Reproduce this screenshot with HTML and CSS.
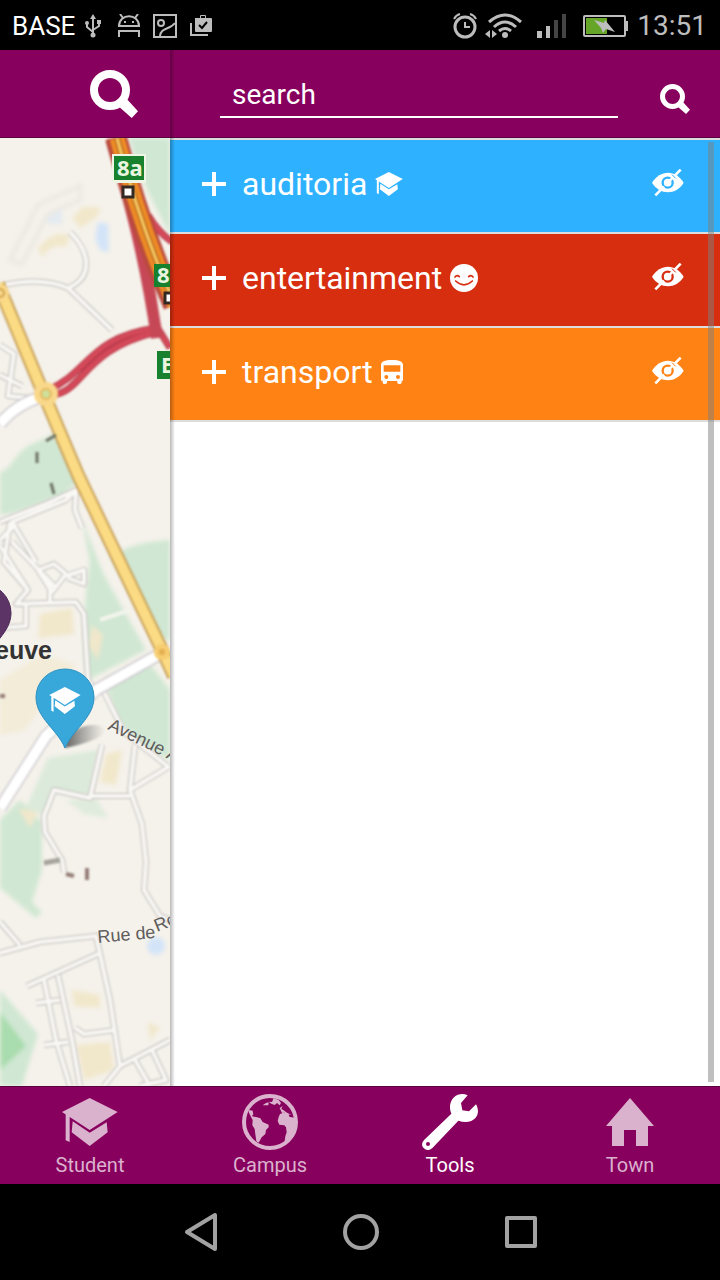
FILE: index.html
```html
<!DOCTYPE html>
<html lang="en">
<head>
<meta charset="utf-8">
<meta name="viewport" content="width=device-width, initial-scale=1">
<title>Campus map</title>
<link rel="stylesheet" href="styles.css">
</head>
<body>
<svg class="defs" aria-hidden="true">
  <symbol id="search" viewBox="0 0 144 144"><circle cx="60" cy="60" r="48" fill="none" stroke="currentColor" stroke-width="24"/><path d="M88 111 111 88 144 124 125 144Z" fill="currentColor"/></symbol>
  <symbol id="cap" viewBox="0 0 168 144"><path fill="currentColor" d="M83 0 167 42 83 96 0 42ZM11 46 23 54V132L11 127ZM32 70 83 104 134 73 137 103 83 144 29 103Z"/></symbol>
  <symbol id="plus" viewBox="0 0 24 24"><path d="M12 0V24M0 12H24" stroke="currentColor" stroke-width="4"/></symbol>
  <symbol id="hide" viewBox="0 0 96 90"><path fill="currentColor" d="M0 41C24 1 72 1 95 41C72 79 24 79 0 41Z"/><circle class="iris" cx="47" cy="41" r="15" fill="none" stroke-width="7"/><circle cx="47" cy="41" r="9" fill="currentColor"/><path d="M10 79 36 53M47 41 63 25M66 22 86 2" stroke="currentColor" stroke-width="8"/><path class="iris" d="M60 17 71 28" stroke-width="3"/></symbol>
</svg>

<header class="status">
  <div class="status-group">
    <span class="carrier">BASE</span>
    <svg width="24" height="24" viewBox="0 0 24 24" fill="none" stroke="currentColor" stroke-width="2"><path d="M12 3V22M6 9V13L12 18M18 9V12L12 16"/><path d="M12 0 15 5H9Z" fill="currentColor" stroke="none"/><circle cx="12" cy="21" r="2.500" fill="currentColor" stroke="none"/><circle cx="6" cy="9" r="2" fill="currentColor" stroke="none"/><path d="M16 6h4v4h-4z" fill="currentColor" stroke="none"/></svg>
    <svg width="24" height="24" viewBox="0 0 24 24" fill="none" stroke="currentColor" stroke-width="2"><path d="M2 12C2-1 22-1 22 12ZM6 4 3 0M18 4 21 0M2 23V17H22V23"/><path d="M7 7h2v2H7zM15 7h2v2h-2z" fill="currentColor" stroke="none"/></svg>
    <svg width="24" height="24" viewBox="0 0 24 24" fill="none" stroke="currentColor" stroke-width="2"><rect x="1" y="1" width="22" height="22"/><circle cx="8" cy="9" r="3"/><path d="M7 22C8 13 17 16 22 9"/></svg>
    <svg width="24" height="24" viewBox="0 0 24 24" fill="none"><path d="M2 9V21H19" stroke="currentColor" stroke-width="2"/><path d="M6 4h5V2q0-1 1-1h4q1 0 1 1v2h5q1 0 1 1v12q0 1-1 1H7q-1 0-1-1ZM12 2v2h4V2Z" fill="currentColor" fill-rule="evenodd"/><path d="M10 11 13 14 18 8" stroke="#000" stroke-width="2"/></svg>
  </div>
  <div class="status-group status-right">
    <svg width="24" height="26" viewBox="0 0 24 26" fill="none" stroke="currentColor" stroke-width="3"><circle cx="12" cy="14" r="10"/><path d="M12 9V14H17M1 6Q3 2 7 1M23 6Q21 2 17 1" stroke-width="2"/></svg>
    <svg width="38" height="26" viewBox="0 0 38 26" fill="none" stroke="currentColor" stroke-width="3"><path d="M4 9Q20-5 36 9M9 14Q20 4 31 14M14 18Q20 13 26 18"/><circle cx="20" cy="22" r="3" fill="currentColor" stroke="none"/><path d="M5 17V25L0 21ZM7 17V25L12 21Z" fill="currentColor" stroke="none"/></svg>
    <svg width="44" height="26" viewBox="0 0 44 26"><path d="M6 18h5v7H6zM15 13h4v12h-4z" fill="currentColor"/><path d="M23 7h4v18h-4zM31 1h4v24h-4z" fill="#444"/></svg>
    <svg width="46" height="24" viewBox="0 0 46 24"><rect x="1" y="2" width="41" height="20" rx="1" fill="none" stroke="currentColor" stroke-width="2"/><path d="M43 7h2v10h-2z" fill="currentColor"/><path d="M3 4h21v16H3z" fill="#65a527"/><path d="M11 6 21 9 22 6 32 18 23 15 20 19 18 14Z" fill="currentColor"/></svg>
    <time>13:51</time>
  </div>
</header>

<main class="app">
  <section class="map-pane">
    <div class="bar map-bar"><button class="icon-button" aria-label="Search the map"><svg width="48" height="48"><use href="#search"/></svg></button></div>
    <div class="map">
    <svg class="map-canvas" viewBox="0 138 170 948" preserveAspectRatio="xMinYMin slice" fill="none" role="img" aria-label="Map">
      <rect y="138" width="170" height="948" fill="#f5f2eb"/>
      <g class="terrain">
      <g fill="#d0e7d3">
        <path d="M129 138C140 180 155 205 170 235V138Z"/>
        <path d="M0 472C10 471 14 455 28 446L56 433 80 480 62 496C40 503 20 513 0 515Z"/>
        <path d="M82 520 104 575 146 650 88 680C82 640 84 600 90 562ZM110 556C130 545 150 541 170 540V640L160 640Z"/>
        <path d="M104 680 150 664 170 690V760L140 744 118 720Z"/>
        <path d="M0 820 20 800 42 822 42 870 32 902 42 912 36 918 0 888Z"/>
        <path d="M0 990 38 1034 22 1086H0Z"/>
        <path d="M48 758 98 750 90 795 54 792 44 815 25 810Z" opacity=".7"/>
        <path d="M66 800 96 798 108 818 84 814Z" opacity=".6"/>
      </g>
      <path d="M0 1012 26 1046 0 1070Z" fill="#a9dcae"/>
      <g fill="#f1e7cb">
        <path d="M38 248Q55 228 70 236L66 247Q52 243 42 257Z"/><path d="M72 218 82 207H100L98 216 80 228Z"/>
        <path d="M40 614 72 608 74 634 38 638Z"/>
        <path d="M0 680 42 655 76 665 40 708 25 730 0 735Z" opacity=".6"/>
        <path d="M106 754 122 750 116 785 100 782ZM72 990 100 995 100 1008 74 1006ZM76 1045 110 1042 114 1070 84 1080ZM148 1022 160 1028 150 1040ZM18 808 38 812 30 828ZM92 625 103 635 98 660 88 645Z"/>
      </g>
      <g fill="#d3e4f8"><path d="M98 222 108 224 109 252 100 250 95 238Z"/><path d="M46 212 62 210 62 224 48 224Z" opacity=".5"/><circle cx="156" cy="946" r="9"/></g>
      <path d="M10 260 38 205 80 186V200L48 214 22 264Z" stroke="#ebe8e3" stroke-width="4"/>
      </g>

      <g class="roads">
      <!-- minor streets: grey casing, then white fill -->
      <g stroke-linejoin="round">
        <g stroke="#bfbcba" stroke-width="6">
          <path d="M0 286Q40 276 68 288Q88 280 86 260Q84 246 70 232M68 288 112 330M0 345 14 354 8 396 30 398M0 375 22 386"/>
          <path d="M0 522 48 503 76 490 75 510 82 528M76 490 66 500 12 522 36 562M10 522 4 562 28 590M0 540 16 524"/>
          <path d="M0 546 28 590 16 604 76 602 84 614 88 680 94 688M12 542 56 588M38 570 54 564 66 574 52 592ZM66 576 84 570V584L68 578M50 584V602M0 628 26 626 26 602"/>
          <path d="M104 692 124 732 170 768M102 745 90 798 54 790 44 816 45 832 62 860 64 872M135 745 130 790 142 824 146 862 144 890 160 916 170 920M130 790 170 766M90 796 130 796"/>
          <path d="M0 953 40 942 96 936 110 1000 120 1066 170 1040M98 954 27 986M44 980 56 1040 70 1086M58 975 72 1040 80 1086M36 1003 60 1000M44 1045 68 1042M0 922 20 945M120 1066 104 1086M134 1058 150 1086M152 1050 166 1080 140 1086M75 1028 84 1034 116 1030"/>
        </g>
        <g stroke="#faf8f5" stroke-width="4">
          <path d="M0 286Q40 276 68 288Q88 280 86 260Q84 246 70 232M68 288 112 330M0 345 14 354 8 396 30 398M0 375 22 386"/>
          <path d="M0 522 48 503 76 490 75 510 82 528M76 490 66 500 12 522 36 562M10 522 4 562 28 590M0 540 16 524"/>
          <path d="M0 546 28 590 16 604 76 602 84 614 88 680 94 688M12 542 56 588M38 570 54 564 66 574 52 592ZM66 576 84 570V584L68 578M50 584V602M0 628 26 626 26 602"/>
          <path d="M104 692 124 732 170 768M102 745 90 798 54 790 44 816 45 832 62 860 64 872M135 745 130 790 142 824 146 862 144 890 160 916 170 920M130 790 170 766M90 796 130 796"/>
          <path d="M0 953 40 942 96 936 110 1000 120 1066 170 1040M98 954 27 986M44 980 56 1040 70 1086M58 975 72 1040 80 1086M36 1003 60 1000M44 1045 68 1042M0 922 20 945M120 1066 104 1086M134 1058 150 1086M152 1050 166 1080 140 1086M75 1028 84 1034 116 1030"/>
        </g>
      </g>
      <path d="M0 424Q16 404 44 396M0 808 46 736 96 690 160 654" stroke="#cfcbd0" stroke-width="13"/>
      <path d="M0 424Q16 404 44 396M0 808 46 736 96 690 160 654" stroke="#fff" stroke-width="10"/>
      <path d="M100 620 130 610" stroke="#f3f4ec" stroke-width="4"/>

      <!-- slip roads and motorway -->
      <path d="M48 390C90 372 88 338 156 328M52 395C84 392 82 350 156 332M148 215Q158 232 172 242M154 322 170 348" stroke="#bd3d4d" stroke-width="7"/>
      <path d="M48 390C90 372 88 338 156 328M52 395C84 392 82 350 156 332M148 215Q158 232 172 242M154 322 170 348" stroke="#d64a5a" stroke-width="4"/>
      <path d="M112 138C126 190 144 248 157 338" stroke="#c64856" stroke-width="12"/>
      <path d="M116 138C130 190 150 250 174 305" stroke="#b94a3e" stroke-width="22"/>
      <path d="M117 138C131 190 150 250 175 305" stroke="#ef8d25" stroke-width="15"/>
      <path d="M117 138C131 190 150 250 175 305" stroke="#b5651f" stroke-width="6"/>
      <path d="M117 138C131 190 150 250 175 305" stroke="#fbd065" stroke-width="3"/>
      <path d="M-2 284 42 390 78 475 162 650 174 676" stroke="#c8a15b" stroke-width="14"/>
      <path d="M-2 284 42 390 78 475 162 650 174 676" stroke="#fbdb83" stroke-width="10"/>
      <circle cx="46" cy="394" r="12" fill="#f9d88b"/><circle cx="46" cy="394" r="5" fill="#cfdf9a" stroke="#e5b85e" stroke-width="2"/>
      <circle cx="0" cy="293" r="9" fill="#f9d88b"/><circle cx="0" cy="293" r="4" stroke="#d1a34e" stroke-width="2"/>
      <circle cx="162" cy="652" r="8" fill="#f6cd70"/><circle cx="162" cy="652" r="3" fill="#e3ae50"/>
      <path d="M46 441 56 435M37 452V463M51 483 54 494" stroke="#6e7365" stroke-width="3"/>
      <path d="M44 863 60 860" stroke="#a5a39a" stroke-width="5"/><path d="M66 874 74 876M87 868V880M0 696H5" stroke="#957e78" stroke-width="4"/>
      </g>

      <!-- road shields -->
      <path d="M112 154H146V183H112Z" fill="#eef5e5"/><path d="M114 156H144V180H114ZM154 264H172V287H154ZM157 351H172V379H157Z" fill="#17812d"/>
      <g class="shield"><text x="117" y="176">8a</text><text x="157" y="283">8</text><text x="161" y="373">E</text></g>
      <path d="M123 187H133V197H123ZM165 293H175V303H165Z" fill="#fff" stroke="#342922" stroke-width="3"/>

      <text class="place" x="-5" y="659">euve</text>
      <text class="street" transform="translate(107 729) rotate(26)">Avenue A</text>
      <text class="street" transform="translate(98 943) rotate(-5)">Rue de</text>
      <text class="street" transform="translate(157 932) rotate(-22)">Ro</text>

      <!-- pins -->
      <defs><linearGradient id="shade"><stop stop-color="#333" stop-opacity=".75"/><stop offset="1" stop-color="#555" stop-opacity="0"/></linearGradient></defs>
      <path class="roads" d="M65 748Q68 726 94 725Q110 726 103 734Q94 742 65 748Z" fill="url(#shade)"/>
      <path d="M65 748C57 729 36 718 36 697A29 28 0 0 1 94 697C94 718 73 729 65 748Z" fill="#38a8da" stroke="#2d91c2"/>
      <svg x="49" y="687" width="32" height="27" color="#fff"><use href="#cap"/></svg>
      <path d="M-18 663C-26 645-47 633-47 613A29 29 0 0 1 11 613C11 633-10 645-18 663Z" fill="#5c3566" stroke="#4c2a56"/>
    </svg>
    </div>
  </section>

  <section class="panel">
    <form class="bar search-form">
      <input class="search-input" type="text" placeholder="search" aria-label="Search">
      <button class="icon-button search-submit" type="button" aria-label="Submit search"><svg width="30" height="30"><use href="#search"/></svg></button>
    </form>
    <ul class="layers">
      <li class="layer blue">
        <button class="layer-toggle"><svg width="24" height="24"><use href="#plus"/></svg><span class="layer-name">auditoria<svg width="28" height="24"><use href="#cap"/></svg></span></button>
        <button class="icon-button" aria-label="Show auditoria"><svg width="32" height="30"><use href="#hide"/></svg></button>
      </li>
      <li class="layer red">
        <button class="layer-toggle"><svg width="24" height="24"><use href="#plus"/></svg><span class="layer-name">entertainment<svg width="28" height="28" viewBox="0 0 84 84" fill="none" stroke-linecap="round"><circle cx="42" cy="42" r="42" fill="currentColor"/><path class="iris" d="M15 39Q21 31 28 38M56 38Q63 31 69 39M17 51Q42 74 67 51" stroke-width="5"/></svg></span></button>
        <button class="icon-button" aria-label="Show entertainment"><svg width="32" height="30"><use href="#hide"/></svg></button>
      </li>
      <li class="layer orange">
        <button class="layer-toggle"><svg width="24" height="24"><use href="#plus"/></svg><span class="layer-name">transport<svg width="22" height="24" viewBox="0 0 66 72"><path fill="currentColor" fill-rule="evenodd" d="M0 16C0 4 10 0 33 0S66 4 66 16V62H62V68Q62 72 55 72Q49 72 49 68V63H18V68Q18 72 11 72Q5 72 5 68V62H0ZM8 16V35H58V16ZM10 51a6 6 0 1 0 12 0a6 6 0 1 0-12 0ZM45 51a6 6 0 1 0 12 0a6 6 0 1 0-12 0Z"/></svg></span></button>
        <button class="icon-button" aria-label="Show transport"><svg width="32" height="30"><use href="#hide"/></svg></button>
      </li>
    </ul>
  </section>
</main>

<nav class="tabs">
  <a class="tab" href="#student"><span class="tab-icon"><svg width="56" height="48"><use href="#cap"/></svg></span>Student</a>
  <a class="tab" href="#campus"><span class="tab-icon"><svg width="56" height="56" viewBox="0 0 168 168"><circle cx="84" cy="84" r="78" fill="none" stroke="currentColor" stroke-width="12"/><path fill="currentColor" d="M22 48 32 50 34 62 29 66 36 68 43 69 55 73 62 84 80 92 80 100 72 108 70 120 59 130 50 146 43 142 40 121 38 105 31 94 32 78 27 69 20 54ZM62 34 72 27 80 25 79 34 67 34ZM80 23 90 24 95 12 110 18 117 27 113 34 105 27 98 33 88 29ZM113 42 122 36 118 44 127 50 135 56 149 63 135 60 127 56 120 57ZM114 60 123 57 139 58 142 68 160 72 158 112 140 143 128 142 130 127 134 115 132 100 127 94 112 92 107 81 110 69Z"/></svg></span>Campus</a>
  <a class="tab active" href="#tools" aria-current="page"><span class="tab-icon"><svg width="56" height="56" viewBox="0 0 168 168"><path fill="currentColor" fill-rule="evenodd" d="M137 4 117 27 121 49 141 52 162 31C170 45 170 60 161 71C150 84 130 87 109 80L32 161C22 170 12 170 5 162C-2 155-1 145 7 137L88 59C80 40 84 22 96 10C108-1 124-2 137 4ZM12 150a6 6 0 1 0 12 0a6 6 0 1 0-12 0Z"/></svg></span>Tools</a>
  <a class="tab" href="#town"><span class="tab-icon"><svg width="48" height="48" viewBox="0 0 144 144"><path fill="currentColor" d="M72 0 144 84H126V144H90V96H54V144H18V84H0Z"/></svg></span>Town</a>
</nav>

<footer class="system-nav">
  <button class="system-button" aria-label="Back"><svg width="40" height="40" viewBox="0 0 40 40"><path d="M35 3V37L7 20Z"/></svg></button>
  <button class="system-button" aria-label="Home"><svg width="40" height="40" viewBox="0 0 40 40"><circle cx="21" cy="20" r="16"/></svg></button>
  <button class="system-button" aria-label="Recent apps"><svg width="40" height="40" viewBox="0 0 40 40"><rect x="7" y="6" width="28" height="28"/></svg></button>
</footer>
</body>
</html>
```
FILE: styles.css
```css
* { box-sizing: border-box; }

body {
  margin: 0;
  min-height: 100vh;
  display: flex;
  flex-direction: column;
  background: #fff;
  font-family: Roboto, "Liberation Sans", sans-serif;
}

svg { display: block; flex: none; }
button { border: 0; padding: 0; background: none; color: inherit; font: inherit; cursor: pointer; }

.defs { position: absolute; width: 0; height: 0; }

.status {
  display: flex;
  justify-content: space-between;
  align-items: center;
  height: 50px;
  padding: 2px 13px 0 12px;
  background: #000;
  color: #bdbdbd;
}
.status-group { display: flex; align-items: center; gap: 12px; }
.status-right { gap: 8px; }
.carrier { margin-right: -6px; color: #fff; font-size: 26px; line-height: 32px; }
.status time { font-size: 28px; line-height: 32px; }

.app { flex: 1; display: flex; }

.map-pane { width: 170px; display: flex; flex-direction: column; }
.map { flex: 1; position: relative; overflow: hidden; background: #f5f2eb; }
.map-canvas { position: absolute; width: 100%; height: 100%; }
.terrain { filter: blur(2px); }
.roads { filter: blur(1px); }
.shield { fill: #e9f5df; font: bold 22px "Noto Sans", sans-serif; }
.place { fill: #333; font: bold 25px "Liberation Sans", Arial, sans-serif; }
.street { fill: #5f5c5c; font: 18px "Liberation Sans", Arial, sans-serif; }

.bar {
  display: flex;
  height: 88px;
  background: #88005d;
  border-bottom: 1px solid #5c0040;
  color: #fff;
}
.map-bar { align-items: center; justify-content: flex-end; padding-right: 32px; }

.panel { flex: 1; min-width: 0; position: relative; background: #fff; }
.panel::before {
  content: "";
  position: absolute;
  inset: 0 auto 0 0;
  width: 5px;
  background: linear-gradient(90deg, rgba(0, 0, 0, .28), transparent);
  pointer-events: none;
}
.panel::after {
  content: "";
  position: absolute;
  inset: 92px 6px 4px auto;
  width: 6px;
  background: rgba(128, 128, 128, .5);
  pointer-events: none;
}

.search-form { align-items: flex-end; gap: 42px; padding: 0 30px 19px 50px; }
.search-input {
  flex: 1;
  min-width: 0;
  height: 46px;
  padding: 0 12px;
  border: 0;
  border-bottom: 2px solid #fff;
  background: none;
  color: #fff;
  font: 28px Roboto, "Liberation Sans", sans-serif;
  outline: 0;
}
.search-input::placeholder { color: #fff; opacity: 1; }
.search-submit { height: 38px; }

.layers { margin: 0; padding: 0; list-style: none; border-top: 2px solid #ddd; }
.layer {
  display: flex;
  align-items: center;
  height: 94px;
  padding: 0 36px 4px 32px;
  border-bottom: 2px solid #ddd;
  color: #fff;
}
.layer-toggle { flex: 1; display: flex; align-items: center; gap: 16px; }
.layer-name { display: flex; align-items: center; gap: 8px; font-size: 32px; line-height: 40px; }
.blue { background: #2eb1ff; --row: #2eb1ff; }
.red { background: #d72e10; --row: #d72e10; }
.orange { background: #ff8214; --row: #ff8214; }
.iris { stroke: var(--row); }

.tabs {
  display: grid;
  grid-template-columns: repeat(4, 1fr);
  background: #88005d;
  border-top: 1px solid #5c0040;
}
.tab {
  display: flex;
  flex-direction: column;
  align-items: center;
  gap: 3px;
  padding: 7px 0;
  color: #dbb2ce;
  font-size: 20px;
  line-height: 24px;
  text-decoration: none;
}
.tab.active { color: #fff; }
.tab-icon { display: flex; align-items: center; height: 56px; }

.system-nav { display: flex; justify-content: center; height: 96px; background: #000; }
.system-button { display: flex; align-items: center; justify-content: center; width: 160px; }
.system-button svg { fill: none; stroke: #a2a2a2; stroke-width: 4; stroke-linejoin: round; }
```
